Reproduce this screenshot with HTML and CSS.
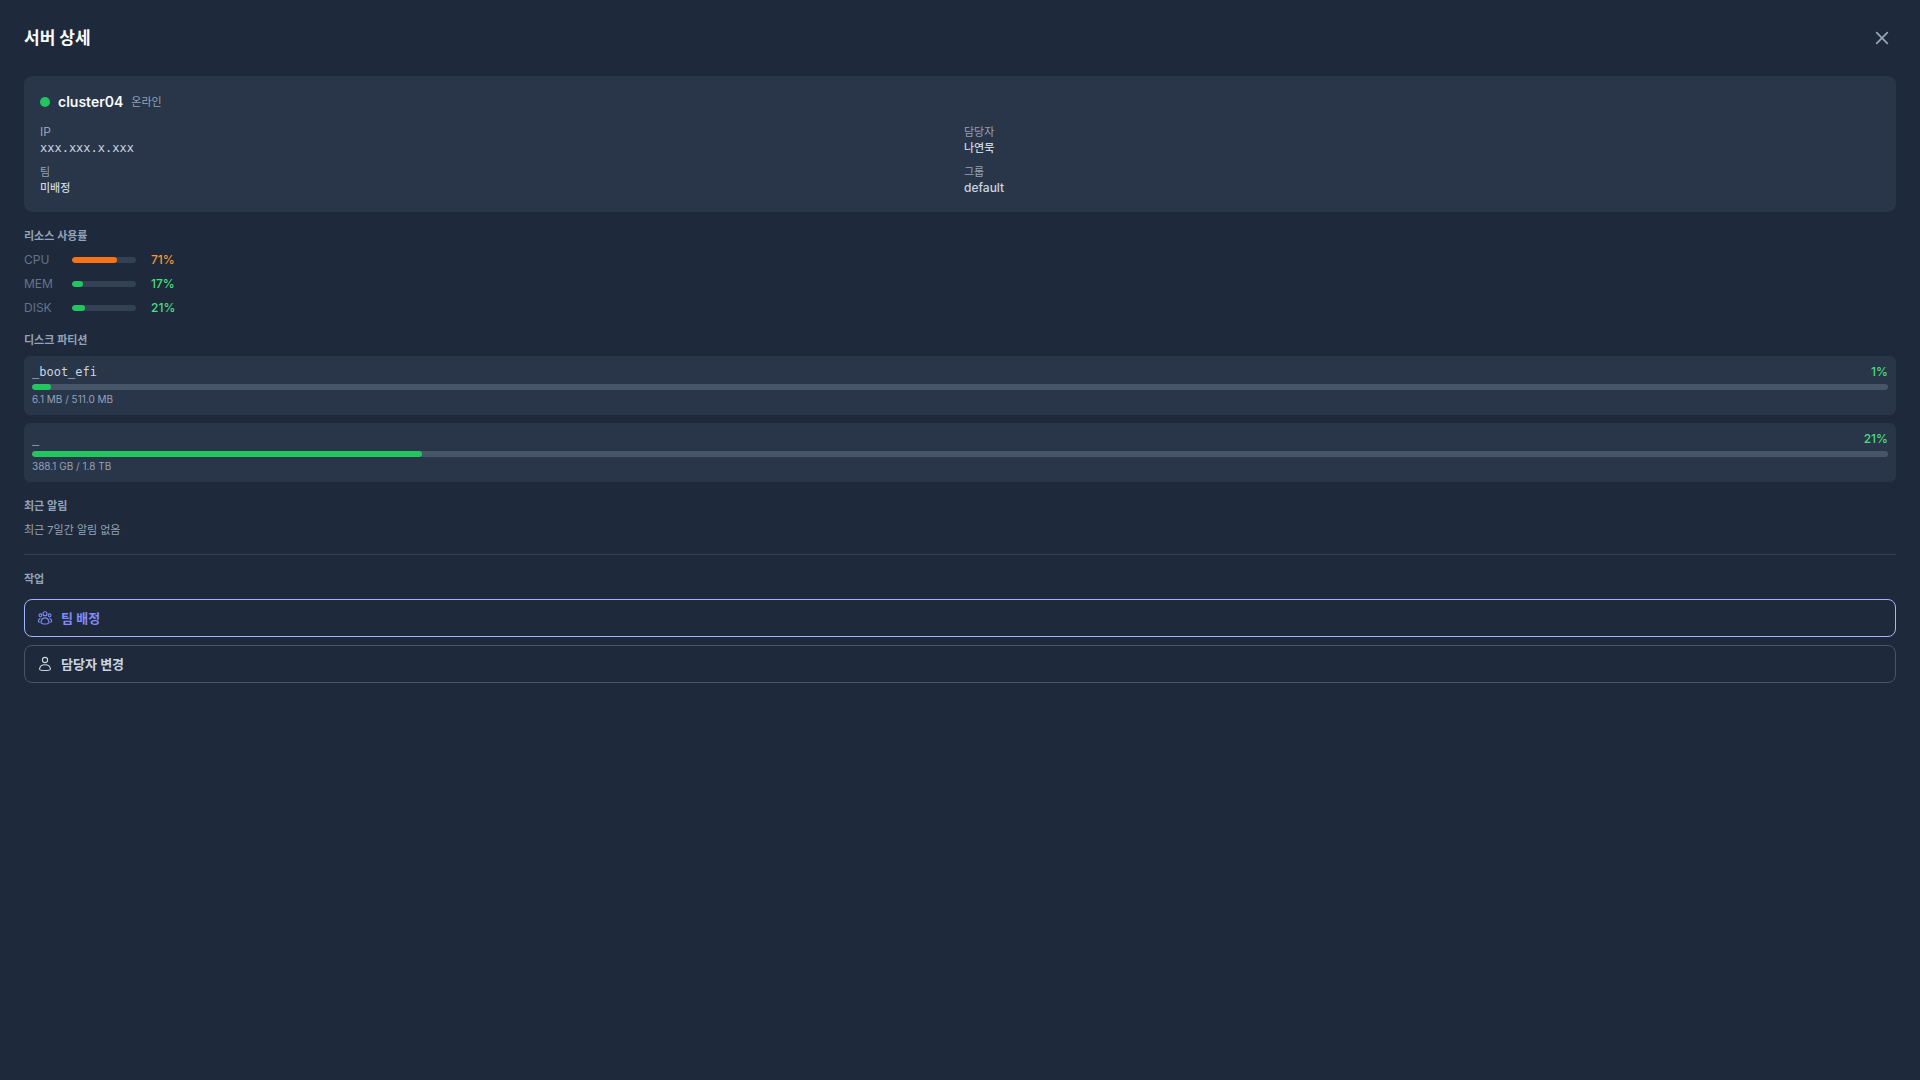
FILE: index.html
```html
<!DOCTYPE html>
<html lang="ko">
<head>
<meta charset="utf-8">
<meta name="viewport" content="width=device-width, initial-scale=1">
<title>서버 상세</title>
<link rel="stylesheet" href="styles.css">
</head>
<body>
<main class="panel">
  <header class="panel-header">
    <h1 class="panel-title">서버 상세</h1>
    <button class="close" type="button" aria-label="닫기">
      <svg width="24" height="24" viewBox="0 0 24 24" fill="none" stroke="currentColor" stroke-width="1.8" stroke-linecap="round"><path d="M6.7 6.7l10.600 10.600M17.300 6.700l-10.600 10.600"/></svg>
    </button>
  </header>

  <div class="sections">
    <section class="summary">
      <div class="identity">
        <span class="dot"></span>
        <h2 class="server-name">cluster04</h2>
        <span class="status ko">온라인</span>
      </div>
      <dl class="facts">
        <div><dt>IP</dt><dd class="mono">xxx.xxx.x.xxx</dd></div>
        <div><dt class="ko">담당자</dt><dd class="ko">나연묵</dd></div>
        <div><dt class="ko">팀</dt><dd class="ko">미배정</dd></div>
        <div><dt class="ko">그룹</dt><dd>default</dd></div>
      </dl>
    </section>

    <section class="stack">
      <h3 class="heading ko">리소스 사용률</h3>
      <div class="usage"><span class="usage-label">CPU</span><div class="track"><div class="fill warn" style="width:71%"></div></div><span class="value warn-text">71%</span></div>
      <div class="usage"><span class="usage-label">MEM</span><div class="track"><div class="fill" style="width:17%"></div></div><span class="value">17%</span></div>
      <div class="usage"><span class="usage-label">DISK</span><div class="track"><div class="fill" style="width:21%"></div></div><span class="value">21%</span></div>
    </section>

    <section class="stack">
      <h3 class="heading ko">디스크 파티션</h3>
      <article class="partition">
        <div class="partition-top"><span class="mono">_boot_efi</span><span class="value">1%</span></div>
        <div class="track track-wide"><div class="fill" style="width:1%"></div></div>
        <p class="capacity">6.1 MB / 511.0 MB</p>
      </article>
      <article class="partition">
        <div class="partition-top"><span class="mono">_</span><span class="value">21%</span></div>
        <div class="track track-wide"><div class="fill" style="width:21%"></div></div>
        <p class="capacity">388.1 GB / 1.8 TB</p>
      </article>
    </section>

    <section class="stack">
      <h3 class="heading ko">최근 알림</h3>
      <p class="empty ko">최근 7일간 알림 없음</p>
    </section>

    <section class="actions">
      <h3 class="heading ko">작업</h3>
      <div class="stack">
        <button class="action primary" type="button">
          <svg width="16" height="16" viewBox="0 0 16 16" fill="none" stroke="currentColor" stroke-width="1.1"><circle cx="8" cy="3.700" r="2"/><circle cx="3.400" cy="5.300" r="1.400"/><circle cx="12.600" cy="5.300" r="1.400"/><path d="M3.900 12.300C4.300 9.800 5.800 7.900 8 7.900s3.700 1.900 4.100 4.400c.1.8-1.700 1.700-4.100 1.700s-4.200-.9-4.100-1.700zM3.500 8.300C2.200 8.800 1.400 9.900 1.300 11.200c0 .7.600 1 1.500 1.100M12.500 8.300c1.300.5 2.100 1.600 2.200 2.900 0 .7-.6 1-1.500 1.100"/></svg>
          팀 배정
        </button>
        <button class="action" type="button">
          <svg width="16" height="16" viewBox="0 0 16 16" fill="none" stroke="currentColor" stroke-width="1.1"><circle cx="8" cy="4" r="2.600"/><path d="M2.600 12.700C3 10.500 5 8.800 8 8.800s5 1.700 5.400 3.900c.2 1-.9 1.500-1.800 1.600q-3.600.5-7.200 0c-.9-.1-2-.6-1.800-1.600z"/></svg>
          담당자 변경
        </button>
      </div>
    </section>
  </div>
</main>
</body>
</html>
```
FILE: styles.css
```css
* { box-sizing: border-box; }

body {
  margin: 0;
  min-height: 100vh;
  background: #1e293b;
  color: #cbd5e1;
  font-family: Inter, "Noto Sans CJK KR", sans-serif;
  font-size: 12px;
  line-height: 16px;
}

h1, h2, h3, p, dl, dd { margin: 0; }

button { font: inherit; cursor: pointer; }

svg { display: block; flex: none; }

.panel { padding: 24px; }

.panel-header {
  display: flex;
  align-items: center;
  justify-content: space-between;
  margin-bottom: 24px;
}

.panel-title {
  color: #f8fafc;
  font-size: 17px;
  font-weight: 700;
  line-height: 28px;
}

.close {
  display: grid;
  place-items: center;
  width: 28px;
  height: 28px;
  padding: 0;
  border: 0;
  background: none;
  color: #94a3b8;
}

.sections {
  display: flex;
  flex-direction: column;
  gap: 16px;
}

.stack {
  display: flex;
  flex-direction: column;
  gap: 8px;
}

.ko { font-size: 11px; }

.mono { font-family: "DejaVu Sans Mono", monospace; }

.summary {
  padding: 16px;
  border-radius: 8px;
  background: #293548;
}

.identity {
  display: flex;
  align-items: center;
  gap: 8px;
  margin-bottom: 12px;
}

.dot {
  width: 10px;
  height: 10px;
  border-radius: 50%;
  background: #22c55e;
}

.server-name {
  color: #f8fafc;
  font-size: 14px;
  font-weight: 600;
  line-height: 20px;
}

.status { color: #94a3b8; }

.facts {
  display: grid;
  grid-template-columns: 1fr 1fr;
  gap: 8px;
}

.facts dt { color: #94a3b8; }

.facts dd { font-weight: 500; }

.heading {
  color: #94a3b8;
  font-weight: 600;
}

.usage {
  display: flex;
  align-items: center;
}

.usage-label {
  width: 48px;
  color: #64748b;
}

.usage .value { margin-left: 15px; }

.track {
  width: 64px;
  height: 6px;
  overflow: hidden;
  border-radius: 3px;
  background: #334155;
}

.track-wide {
  width: 100%;
  background: #475569;
}

.fill {
  height: 100%;
  border-radius: 3px;
  background: #22c55e;
}

.fill.warn { background: #f97316; }

.value {
  color: #4ade80;
  font-weight: 500;
}

.value.warn-text { color: #fb923c; }

.partition {
  padding: 8px;
  border-radius: 6px;
  background: #293548;
}

.partition-top {
  display: flex;
  justify-content: space-between;
  margin-bottom: 4px;
}

.capacity {
  margin-top: 2px;
  color: #94a3b8;
  font-size: 10px;
  line-height: 15px;
}

.empty { color: #94a3b8; }

.actions {
  display: flex;
  flex-direction: column;
  gap: 12px;
  padding-top: 16px;
  border-top: 1px solid #334155;
}

.action {
  display: flex;
  align-items: center;
  gap: 8px;
  width: 100%;
  padding: 8px 12px;
  border: 1px solid #475569;
  border-radius: 8px;
  background: none;
  color: #cbd5e1;
  font-size: 13px;
  font-weight: 600;
  line-height: 20px;
}

.action.primary {
  border-color: #a5b4fc;
  color: #818cf8;
}
```
